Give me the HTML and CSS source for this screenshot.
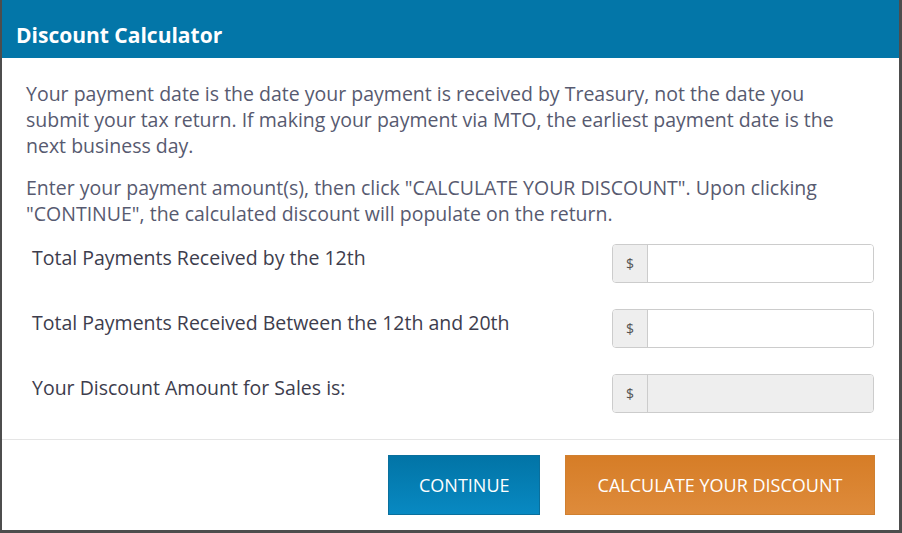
FILE: index.html
```html
<!DOCTYPE html>
<html lang="en">
<head>
    <meta charset="UTF-8">
    <meta name="viewport" content="width=device-width, initial-scale=1.0">
    <title>Discount Calculator</title>
    <link rel="stylesheet" href="styles.css">
</head>
<body>

    <div class="modal">
        <div class="modal-header">
            <h1>Discount Calculator</h1>
        </div>

        <div class="modal-body">
            <p>Your payment date is the date your payment is received by Treasury, not the date you submit your tax return. If making your payment via MTO, the earliest payment date is the next business day.</p>
            <p>Enter your payment amount(s), then click "CALCULATE YOUR DISCOUNT". Upon clicking "CONTINUE", the calculated discount will populate on the return.</p>

            <form id="form">
                <div class="form-row">
                    <label for="pago-12">Total Payments Received by the 12th</label>
                    <div class="input-group">
                        <span class="addon">$</span>
                        <input type="text" id="pago-12">
                    </div>
                </div>
                <div class="form-row">
                    <label for="pago-20">Total Payments Received Between the 12th and 20th</label>
                    <div class="input-group">
                        <span class="addon">$</span>
                        <input type="text" id="pago-20">
                    </div>
                </div>
                <div class="form-row">
                    <label for="desconto">Your Discount Amount for Sales is:</label>
                    <div class="input-group">
                        <span class="addon">$</span>
                        <input type="text" id="desconto" disabled>
                    </div>
                </div>
            </form>
        </div>

        <div class="modal-footer">
            <button type="button" class="btn-continue">Continue</button>
            <button type="button" class="btn-calc">Calculate Your Discount</button>
        </div>
    </div>

</body>
</html>
```

FILE: styles.css
```css
body {
    font-family: "Open Sans", Arial, sans-serif;
    background-color: #4d4d4d;
    margin: 0;
    height: 533px;
    overflow: hidden;
}
.modal {
    background-color: #fff;
    margin-left: 2px;
    width: 897px;
    height: 530px;
    display: flex;
    flex-direction: column;
}
.modal-header {
    background-color: #0376a8;
    height: 58px;
    padding: 21px 14px 0;
    box-sizing: border-box;
}
h1 {
    color: #fff;
    font-size: 21px;
    line-height: 28px;
    font-weight: bold;
    margin: 0;
}
.modal-body {
    padding: 23px 25px 0 24px;
    color: #575a70;
    font-size: 19.5px;
    line-height: 26px;
}
.modal-body p {
    margin: 0 25px 16px 0;
}
#form {
    padding-top: 1px;
}
.form-row {
    display: flex;
    align-items: flex-start;
    margin-bottom: 26px;
}
.form-row label {
    flex: 1;
    color: #3d3d4d;
    padding-left: 6px;
    margin-top: 1px;
}
.input-group {
    display: flex;
    width: 262px;
    height: 39px;
    border: 1px solid #ccc;
    border-radius: 4px;
    box-sizing: border-box;
    overflow: hidden;
}
.addon {
    width: 34px;
    background-color: #eee;
    border-right: 1px solid #ccc;
    color: #555;
    font-size: 14px;
    display: flex;
    align-items: center;
    justify-content: center;
}
.input-group input {
    flex: 1;
    border: none;
    padding: 6px 12px;
    font-size: 16px;
    min-width: 0;
}
.input-group input:disabled {
    background-color: #eee;
}
.modal-footer {
    border-top: 1px solid #e5e5e5;
    padding: 15px 24px 15px 0;
    display: flex;
    justify-content: flex-end;
    gap: 25px;
    margin-top: auto;
}
button {
    font-family: "Open Sans", Arial, sans-serif;
    color: #fff;
    font-size: 18px;
    text-transform: uppercase;
    height: 60px;
    padding: 0 30px;
    border: 1px solid transparent;
    cursor: pointer;
}
.btn-continue {
    background: linear-gradient(#0274a6, #0889c2);
    border-color: #0a6f9c;
    width: 152px;
}
.btn-calc {
    background: linear-gradient(#d67d27, #de8b3b);
    border-color: #d08030;
    width: 310px;
}
```
